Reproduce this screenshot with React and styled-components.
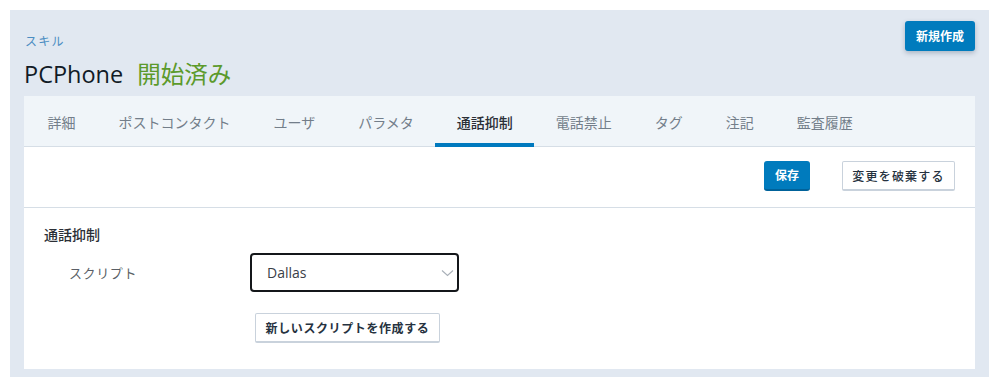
import styled, { createGlobalStyle } from "styled-components"

const Global = createGlobalStyle`
    body{
        margin: 0;
        background: #ffffff;
        font-family: "Open Sans", "Noto Sans CJK JP", sans-serif;
    }
`

const Pagina = styled.div`
    padding: 10px 12px 12px 10px;
`

const Painel = styled.div`
    background-color: #e1e8f1;
    padding: 0 14px 8px 14px;
`

const Cabecalho = styled.div`
    height: 86px;
    display: flex;
    justify-content: space-between;
    align-items: flex-start;
`

const Titulos = styled.div`
    padding-top: 24px;
    display: flex;
    flex-direction: column;
`

const Migalha = styled.a`
    font-size: 12px;
    line-height: 16px;
    color: #4b8dc2;
    padding-left: 1px;
    letter-spacing: 1.3px;
`

const Titulo = styled.h1`
    margin: 9px 0 0 0;
    font-size: 23.5px;
    line-height: 30px;
    font-weight: 400;
    color: #111b26;
    span{
        color: #5c9a2b;
        margin-left: 14px;
    }
`

const BotaoAzul = styled.button`
    margin-top: ${(p) => p.$top || 0}px;
    width: ${(p) => p.$w}px;
    height: 30px;
    background-color: #007bbd;
    border: none;
    border-bottom: ${(p) => (p.$raised ? "none" : "2px solid #00629a")};
    border-radius: 3px;
    box-shadow: ${(p) => (p.$raised ? "0 2px 5px rgba(40, 60, 90, 0.3)" : "none")};
    color: #ffffff;
    font-family: inherit;
    font-size: 12px;
    font-weight: 700;
    cursor: pointer;
    padding: 0;
`

const Cartao = styled.div`
    background-color: #ffffff;
`

const Abas = styled.div`
    height: 50px;
    background-color: #f0f5f9;
    border-bottom: 1px solid #d6dee6;
    display: flex;
    padding-left: 2px;
`

const Aba = styled.div`
    padding: 4px 21.5px 0 21.5px;
    display: flex;
    align-items: center;
    font-size: 14px;
    color: ${(p) => (p.$ativa ? "#2b2f36" : "#737e8a")};
    font-weight: ${(p) => (p.$ativa ? 500 : 400)};
    border-bottom: 4px solid ${(p) => (p.$ativa ? "#0079be" : "transparent")};
    margin-bottom: -1px;
    cursor: pointer;
`

const Acoes = styled.div`
    height: 61px;
    box-sizing: border-box;
    border-bottom: 1px solid #d6dee6;
    display: flex;
    justify-content: flex-end;
    align-items: flex-start;
    gap: 32px;
    padding: 14px 20px 0 0;
`

const BotaoBranco = styled.button`
    margin-left: ${(p) => p.$left || 0}px;
    width: ${(p) => p.$w}px;
    height: 30px;
    background-color: #ffffff;
    border: 1px solid #c9d2dc;
    border-bottom-width: 2px;
    border-radius: 2px;
    color: #263240;
    font-family: inherit;
    font-size: 12px;
    font-weight: ${(p) => (p.$bold ? 700 : 500)};
    letter-spacing: ${(p) => (p.$bold ? 0.6 : 1.2)}px;
    padding: 0;
    cursor: pointer;
`

const Secao = styled.div`
    padding: 18px 20px 26px 20px;
`

const SecaoTitulo = styled.h2`
    margin: 0;
    font-size: 14px;
    line-height: 18px;
    font-weight: 500;
    color: #2b2f36;
`

const Linha = styled.div`
    display: grid;
    grid-template-columns: 181px 209px;
    align-items: center;
    padding-left: 25px;
    margin-top: ${(p) => p.$top}px;
`

const Rotulo = styled.label`
    font-size: 13px;
    color: #5a5f66;
    letter-spacing: 0.6px;
`

const Seletor = styled.div`
    height: 39px;
    box-sizing: border-box;
    border: 2px solid #14171a;
    border-radius: 4px;
    display: flex;
    align-items: center;
    justify-content: space-between;
    padding: 0 3px 0 15px;
    font-size: 14px;
    color: #3a4048;
`

const App = () => {
    const abas = ["詳細", "ポストコンタクト", "ユーザ", "パラメタ", "通話抑制", "電話禁止", "タグ", "注記", "監査履歴"]

    return(
        <>
            <Global />
            <Pagina>
                <Painel>
                    <Cabecalho>
                        <Titulos>
                            <Migalha>スキル</Migalha>
                            <Titulo>PCPhone<span>開始済み</span></Titulo>
                        </Titulos>
                        <BotaoAzul $raised $w={70} $top={11}>新規作成</BotaoAzul>
                    </Cabecalho>
                    <Cartao>
                        <Abas>
                            {abas.map((aba) => (
                                <Aba key={aba} $ativa={aba === "通話抑制"}>{aba}</Aba>
                            ))}
                        </Abas>
                        <Acoes>
                            <BotaoAzul $w={46}>保存</BotaoAzul>
                            <BotaoBranco $w={113}>変更を破棄する</BotaoBranco>
                        </Acoes>
                        <Secao>
                            <SecaoTitulo>通話抑制</SecaoTitulo>
                            <Linha $top={9}>
                                <Rotulo>スクリプト</Rotulo>
                                <Seletor>
                                    Dallas
                                    <svg width="13" height="8" viewBox="0 0 13 8">
                                        <path d="M1 1.5 L6.5 6.5 L12 1.5" fill="none" stroke="#a9b0b8" strokeWidth="1.1" />
                                    </svg>
                                </Seletor>
                            </Linha>
                            <Linha $top={21}>
                                <span></span>
                                <BotaoBranco $bold $w={185} $left={5}>新しいスクリプトを作成する</BotaoBranco>
                            </Linha>
                        </Secao>
                    </Cartao>
                </Painel>
            </Pagina>
        </>
    )
}

export default App
